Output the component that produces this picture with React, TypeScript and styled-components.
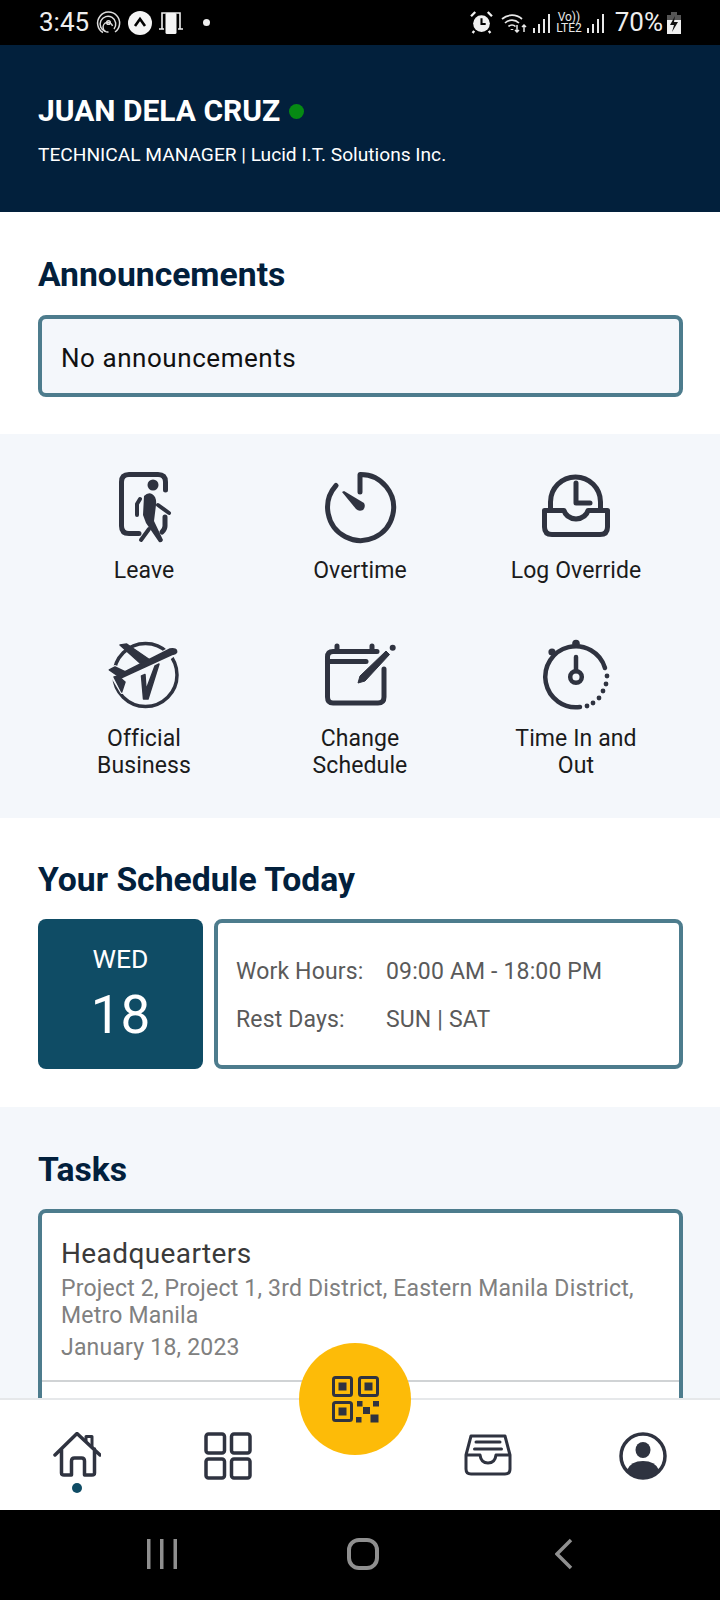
import React from "react";
import styled, { createGlobalStyle } from "styled-components";

const GlobalStyle = createGlobalStyle`
  html, body {
    margin: 0;
    padding: 0;
    background: #000;
  }
  * {
    box-sizing: border-box;
  }
`;

const Screen = styled.div`
  position: relative;
  width: 720px;
  height: 1600px;
  display: flex;
  flex-direction: column;
  overflow: hidden;
  font-family: Roboto, "Liberation Sans", sans-serif;
  background: #fff;
`;

const StatusBar = styled.div`
  flex: 0 0 45px;
  display: flex;
  align-items: center;
  justify-content: space-between;
  padding: 0 39px 0 39px;
  background: #000;
  color: #eee;
`;
const StatusGroup = styled.div<{ $gap: number }>`
  display: flex;
  align-items: center;
  gap: ${(p) => p.$gap}px;
`;
const StatusText = styled.span`
  font-size: 26px;
  line-height: 45px;
`;
const BatteryText = styled(StatusText)`
  margin-left: 5px;
`;
const AlarmSlot = styled.span`
  display: flex;
  margin-right: 4px;
`;

const Content = styled.div`
  flex: 1;
  min-height: 0;
  overflow: hidden;
`;

const Header = styled.header`
  height: 167px;
  padding: 50px 38px 0;
  background: #02203c;
  color: #fff;
`;
const NameRow = styled.div`
  display: flex;
  align-items: center;
  gap: 9px;
`;
const Name = styled.h1`
  margin: 0;
  font-size: 30px;
  line-height: 32px;
  font-weight: 700;
`;
const OnlineDot = styled.span`
  width: 15px;
  height: 15px;
  border-radius: 50%;
  background: #068a13;
`;
const Role = styled.p`
  margin: 17px 0 0;
  font-size: 19.15px;
  line-height: 22px;
`;

const Section = styled.section<{ $tint?: boolean; $h: number; $top: number }>`
  height: ${(p) => p.$h}px;
  padding: ${(p) => p.$top}px 37px 0 38px;
  background: ${(p) => (p.$tint ? "#f4f7fb" : "#fff")};
`;
const Heading = styled.h2<{ $after: number }>`
  margin: 0 0 ${(p) => p.$after}px;
  font-size: 33.7px;
  line-height: 44px;
  font-weight: 700;
  color: #02203c;
`;

const AnnouncementBox = styled.div`
  height: 82px;
  display: flex;
  align-items: center;
  padding: 4px 19px 0;
  font-size: 26px;
  letter-spacing: 0.55px;
  color: #111;
  background: #f4f7fb;
  border: 4px solid #4d7c8d;
  border-radius: 8px;
`;

const ActionsSection = styled.section`
  height: 384px;
  padding: 31px 36px 0;
  background: #f4f7fb;
  display: grid;
  grid-template-columns: repeat(3, 216px);
  grid-template-rows: 170px 170px;
`;
const Action = styled.button`
  display: flex;
  flex-direction: column;
  align-items: center;
  padding: 0;
  border: 0;
  background: none;
  font: inherit;
  color: #1b1b1b;
`;
const ActionIcon = styled.svg`
  width: 80px;
  height: 80px;
  flex: none;
`;
const ActionLabel = styled.span<{ $top: number }>`
  width: 140px;
  margin-top: ${(p) => p.$top}px;
  font-size: 23px;
  line-height: 27px;
  letter-spacing: 0.1px;
  text-align: center;
`;

const ScheduleRow = styled.div`
  display: flex;
  gap: 11px;
  height: 150px;
`;
const DateCard = styled.div`
  flex: 0 0 165px;
  display: flex;
  flex-direction: column;
  align-items: center;
  padding-top: 23px;
  background: #0f4c65;
  border-radius: 8px;
  color: #fff;
`;
const DateDay = styled.div`
  font-size: 26.5px;
  line-height: 34px;
`;
const DateNumber = styled.div`
  font-size: 53px;
  line-height: 60px;
  margin-top: 9px;
`;
const InfoCard = styled.div`
  flex: 1;
  display: grid;
  grid-template-columns: 150px 1fr;
  align-content: center;
  row-gap: 20px;
  padding: 4px 18px 0;
  font-size: 23px;
  line-height: 28px;
  letter-spacing: 0.15px;
  color: #5a5a5a;
  background: #fff;
  border: 4px solid #4d7c8d;
  border-radius: 8px;
`;

const TaskCard = styled.div`
  background: #fff;
  border: 4px solid #4d7c8d;
  border-radius: 8px;
`;
const TaskItem = styled.div`
  padding: 19px 19px 19px;
  border-bottom: 2px solid #d0d3d5;
`;
const TaskTitle = styled.div`
  font-size: 28px;
  line-height: 43px;
  letter-spacing: 0.4px;
  color: #3a3a3a;
`;
const TaskText = styled.div`
  font-size: 23px;
  line-height: 27px;
  letter-spacing: 0.2px;
  color: #808080;
`;
const TaskDate = styled(TaskText)`
  margin-top: 5px;
`;
const TaskBlank = styled.div`
  height: 120px;
`;

const TabBar = styled.nav`
  flex: 0 0 112px;
  display: flex;
  justify-content: space-between;
  padding: 32px 53px 0;
  background: #fff;
  border-top: 2px solid #e6e8ea;
`;
const TabGroup = styled.div<{ $gap: number }>`
  display: flex;
  gap: ${(p) => p.$gap}px;
`;
const Tab = styled.div`
  position: relative;
  width: 48px;
  height: 48px;
`;
const TabIcon = styled.svg`
  display: block;
  width: 48px;
  height: 48px;
`;
const ActiveDot = styled.span`
  position: absolute;
  left: 19px;
  top: 51px;
  width: 10px;
  height: 10px;
  border-radius: 50%;
  background: #0f4c65;
`;
const Fab = styled.button`
  position: absolute;
  left: 299px;
  top: 1343px;
  width: 112px;
  height: 112px;
  display: flex;
  align-items: center;
  justify-content: center;
  padding: 0;
  border: 0;
  border-radius: 50%;
  background: #fdbb08;
`;

const SystemNav = styled.div`
  flex: 0 0 90px;
  display: grid;
  grid-template-columns: repeat(3, 201px);
  align-items: center;
  padding: 0 0 2px 61px;
  background: #000;
`;
const SystemIcon = styled.svg`
  justify-self: center;
  display: block;
`;

const ink = "#2f3340";
const tintBg = "#f4f7fb";

const lineProps = {
  fill: "none",
  stroke: ink,
  strokeWidth: 5,
  strokeLinecap: "round" as const,
  strokeLinejoin: "round" as const,
};

const LeaveIcon = () => (
  <ActionIcon viewBox="0 0 80 80">
    <path {...lineProps} d="M61.5 25 V17 Q61.5 9.5 54 9.500 H25 Q17.500 9.500 17.500 17 V61 Q17.500 68.500 25 68.500 H35" />
    <path {...lineProps} d="M61 52 V61 Q61 64 58 67" />
    <circle cx="49" cy="20" r="5.5" fill={ink} />
    <path fill={ink} d="M40 31 Q44 27 48 29 Q53 32 52 40 L50 56 L59 75 Q58 78 55 77 L42 58 L39 50 Z" />
    <path {...lineProps} strokeWidth={4} d="M36 34 L33 39 L33 50" />
    <path {...lineProps} strokeWidth={4} d="M54 40 L65 48" />
    <path {...lineProps} strokeWidth={4} d="M45 64 L37 75" />
  </ActionIcon>
);

const OvertimeIcon = () => (
  <ActionIcon viewBox="0 0 80 80">
    <path {...lineProps} d="M40 27 V9.5 A33 33 0 1 1 16 20.5" />
    <path fill={ink} d="M22 27 L24 26 L44 38 Q46 42 43 45 Q39 47 36 44 Z" />
  </ActionIcon>
);

const LogOverrideIcon = () => (
  <ActionIcon viewBox="0 0 80 80">
    <path {...lineProps} d="M14.5 43 V37 A25 25 0 0 1 64.5 37 V43" />
    <path {...lineProps} d="M40 18 V38 H54" />
    <path {...lineProps} d="M8.5 45.5 H28 Q30 53 40 54 Q50 53 52 45.5 H71.5 V62 Q71.5 69.5 64 69.5 H16 Q8.5 69.5 8.5 62 Z" />
  </ActionIcon>
);

const BusinessIcon = () => (
  <ActionIcon viewBox="0 0 80 80">
    <circle cx="41.5" cy="40" r="31.5" fill="none" stroke={ink} strokeWidth={3.5} />
    <path fill={tintBg} stroke={tintBg} strokeWidth={4} strokeLinejoin="round" d="M5 35 L11 32 L21 36 L36 28 L46 25 L66 14 Q73 13 72.700 17 L56 30 L44 64 L39 64 L36 42 L24 48 L18 57 L9 42 Z" />
    <path fill={ink} stroke={ink} strokeWidth={1.5} strokeLinejoin="round" d="M16 10 L22.700 9 L46 25 L36 28 Z" />
    <path fill={ink} stroke={ink} strokeWidth={1.5} strokeLinejoin="round" d="M5.300 35 L11 32 L21 36.700 L66 14 Q73 13 72.700 17 Q72 19 68 19.500 L19 42 L17 43 Z" />
    <path fill={ink} stroke={ink} strokeWidth={1.5} strokeLinejoin="round" d="M10 42 L14 41 L21 47 L17.700 57 Z" />
    <path fill={ink} stroke={ink} strokeWidth={1.5} strokeLinejoin="round" d="M51 31 L55 29 L44 64 L39.500 64 L37.500 41 L41 39.500 L42 55 Z" />
  </ActionIcon>
);

const ScheduleIcon = () => (
  <ActionIcon viewBox="0 0 80 80">
    <path {...lineProps} d="M57 16.500 H13 Q7.500 16.500 7.500 22 V62 Q7.500 68 13 68 H58 Q64 68 64 62 V34" />
    <path {...lineProps} d="M7.500 26.500 H46" />
    <path {...lineProps} d="M17 11 V16 M52 11 V16" />
    <path fill={ink} stroke={ink} strokeWidth={1} strokeLinejoin="round" d="M38 48 L40 41 L66 16 L69.500 19.500 L45 46 Z" />
    <circle cx="72.700" cy="12.700" r="3" fill={ink} />
  </ActionIcon>
);

const timeDots: [number, number][] = [
  [71, 41],
  [70, 49],
  [67, 56],
  [63, 63],
  [57, 68],
  [51, 71],
];

const TimeIcon = () => (
  <ActionIcon viewBox="0 0 80 80">
    <path {...lineProps} strokeWidth={4.5} d="M69 33 A30.5 30.5 0 1 0 44 72" />
    {timeDots.map(([cx, cy]) => (
      <circle key={cx + "-" + cy} cx={cx} cy={cy} r="2.4" fill={ink} />
    ))}
    <circle cx="40" cy="8.5" r="3.8" fill={ink} />
    <circle cx="16" cy="17" r="3.6" fill={ink} />
    <path {...lineProps} strokeWidth={4.5} d="M40 22 V36" />
    <circle cx="40" cy="42" r="5.8" fill="none" stroke={ink} strokeWidth={4.5} />
  </ActionIcon>
);

const HomeIcon = () => (
  <TabIcon viewBox="0 0 48 48">
    <path fill="none" stroke={ink} strokeWidth={3.500} strokeLinejoin="round" strokeLinecap="round" d="M2 23 L24 1.500 L47 23 M8.500 17 V41 Q8.500 43 11 43 H18.500 V29 Q18.500 26 21.500 26 H28.500 Q31.500 26 31.500 29 V43 H39 Q41.500 43 41.500 41 V17" />
    <path fill="none" stroke={ink} strokeWidth={3} strokeLinejoin="round" d="M33 9 V4.500 H39 V15" />
  </TabIcon>
);

const GridIcon = () => (
  <TabIcon viewBox="0 0 48 48">
    <g fill="none" stroke={ink} strokeWidth={3.5}>
      <rect x="2" y="2" width="18.500" height="19" rx="2.500" />
      <rect x="27.500" y="2" width="18.500" height="19" rx="2.500" />
      <rect x="2" y="27" width="18.500" height="19" rx="2.500" />
      <rect x="27.500" y="27" width="18.500" height="19" rx="2.500" />
    </g>
  </TabIcon>
);

const InboxIcon = () => (
  <TabIcon viewBox="0 0 48 48">
    <path fill="none" stroke={ink} strokeWidth={3} strokeLinejoin="round" strokeLinecap="round" d="M7 4 H41 L46 23 V37 Q46 42 41 42 H7 Q2 42 2 37 V23 Z M2 23 H16 Q17 31 24 31 Q31 31 32 23 H46 M12 10 H36 M10.500 17 H37.500" />
  </TabIcon>
);

const ProfileIcon = () => (
  <TabIcon viewBox="0 0 48 48">
    <circle cx="24" cy="24" r="22" fill="none" stroke={ink} strokeWidth={3.5} />
    <ellipse cx="24" cy="18" rx="7.500" ry="8" fill={ink} />
    <path fill={ink} d="M8 38 Q12 29 24 29 Q36 29 40 38 Q33 46 24 46 Q15 46 8 38 Z" />
  </TabIcon>
);

const QrIcon = () => (
  <svg width="47" height="47" viewBox="0 0 47 47">
    <g fill="none" stroke={ink} strokeWidth={3}>
      <rect x="1.500" y="1.500" width="18" height="18" rx="2" />
      <rect x="27.500" y="1.500" width="18" height="18" rx="2" />
      <rect x="1.500" y="26.500" width="18" height="18" rx="2" />
    </g>
    <g fill={ink}>
      <rect x="6.500" y="6.500" width="8" height="8" />
      <rect x="32.500" y="6.500" width="8" height="8" />
      <rect x="6.500" y="31.500" width="8" height="8" />
      <rect x="25" y="25" width="5.500" height="5.500" />
      <rect x="41" y="25" width="6" height="5.500" />
      <rect x="31" y="31" width="7" height="7" />
      <rect x="24" y="41" width="5.500" height="5.500" />
      <rect x="38.500" y="38.500" width="8" height="8" />
    </g>
  </svg>
);

const FingerprintIcon = () => (
  <svg width="25" height="25" viewBox="0 0 25 25" fill="none" stroke="#ddd" strokeWidth={1.5}>
    <path d="M7 22.500 A11 11 0 1 1 19 22" />
    <path d="M9.500 21.500 A7.800 7.800 0 1 1 18 19" />
    <path d="M12.500 22 A4.800 4.800 0 1 1 16.500 16" />
    <circle cx="12.500" cy="12.500" r="1.800" />
  </svg>
);

const ArrowBadge = () => (
  <svg width="24" height="24" viewBox="0 0 24 24">
    <circle cx="12" cy="12" r="12" fill="#f4f4f4" />
    <path d="M7 15 L12 8 L17 15" fill="none" stroke="#000" strokeWidth={2.6} />
  </svg>
);

const DeviceIcon = () => (
  <svg width="24" height="24" viewBox="0 0 24 24">
    <path d="M0 18 H5 M19 18 H24" stroke="#eee" strokeWidth={1.6} />
    <path d="M3 18 V2 H21 V18" fill="none" stroke="#eee" strokeWidth={1.6} />
    <rect x="6.500" y="2" width="11" height="21" rx="1.500" fill="#f4f4f4" />
  </svg>
);

const SmallDot = styled.span`
  width: 7px;
  height: 7px;
  margin-left: 13px;
  border-radius: 50%;
  background: #eee;
`;

const AlarmIcon = () => (
  <svg width="23" height="23" viewBox="0 0 22 22">
    <circle cx="11" cy="12" r="8" fill="#f0f0f0" />
    <path d="M11 7 V12.500 H15" fill="none" stroke="#000" strokeWidth={2} />
    <path d="M1 5 L5 1 M21 5 L17 1 M4 19 L2.500 21 M18 19 L19.500 21" stroke="#f0f0f0" strokeWidth={2.2} />
  </svg>
);

const WifiIcon = () => (
  <svg width="27" height="24" viewBox="0 0 27 24" fill="none" stroke="#e8e8e8" strokeWidth={1.7}>
    <path d="M1 8 A15 15 0 0 1 21 8" />
    <path d="M4 12 A10 10 0 0 1 18 12" />
    <path d="M7.500 15.500 A5 5 0 0 1 14.500 15.500" />
    <path d="M11 18 V19" strokeWidth={2.6} />
    <path d="M16 14 V21 M14 19 L16 21 L18 19 M23 21 V14 M21 16 L23 14 L25 16" strokeWidth={1.5} />
  </svg>
);

const SignalIcon = () => (
  <svg width="20" height="22" viewBox="0 0 20 22" fill="#e8e8e8">
    <rect x="1" y="16" width="2" height="5" />
    <rect x="6" y="12" width="2" height="9" />
    <rect x="11" y="7" width="2" height="14" />
    <rect x="16" y="2" width="2" height="19" />
  </svg>
);

const VolteBox = styled.span`
  display: flex;
  flex-direction: column;
  align-items: center;
  font-size: 12px;
  line-height: 11px;
  color: #e8e8e8;
`;

const BatteryIcon = () => (
  <svg width="14" height="24" viewBox="0 0 14 24">
    <rect x="4" y="1" width="6" height="3" fill="#555" />
    <rect x="0" y="4" width="14" height="6" fill="#555" />
    <rect x="0" y="9" width="14" height="14" fill="#f0f0f0" />
    <path d="M8 5 L3 14 H7 L5 21 L11 11 H7 Z" fill="#111" />
  </svg>
);

export default function App() {
  return (
    <Screen>
      <GlobalStyle />
      <StatusBar>
        <StatusGroup $gap={7}>
          <StatusText>3:45</StatusText>
          <FingerprintIcon />
          <ArrowBadge />
          <DeviceIcon />
          <SmallDot />
        </StatusGroup>
        <StatusGroup $gap={4}>
          <AlarmSlot>
            <AlarmIcon />
          </AlarmSlot>
          <WifiIcon />
          <SignalIcon />
          <VolteBox>
            <span>Vo))</span>
            <span>LTE2</span>
          </VolteBox>
          <SignalIcon />
          <BatteryText>70%</BatteryText>
          <BatteryIcon />
        </StatusGroup>
      </StatusBar>

      <Content>
        <Header>
          <NameRow>
            <Name>JUAN DELA CRUZ</Name>
            <OnlineDot />
          </NameRow>
          <Role>TECHNICAL MANAGER | Lucid I.T. Solutions Inc.</Role>
        </Header>

        <Section $h={222} $top={41}>
          <Heading $after={18}>Announcements</Heading>
          <AnnouncementBox>No announcements</AnnouncementBox>
        </Section>

        <ActionsSection>
          <Action>
            <LeaveIcon />
            <ActionLabel $top={12}>Leave</ActionLabel>
          </Action>
          <Action>
            <OvertimeIcon />
            <ActionLabel $top={12}>Overtime</ActionLabel>
          </Action>
          <Action>
            <LogOverrideIcon />
            <ActionLabel $top={12}>Log Override</ActionLabel>
          </Action>
          <Action>
            <BusinessIcon />
            <ActionLabel $top={10}>Official Business</ActionLabel>
          </Action>
          <Action>
            <ScheduleIcon />
            <ActionLabel $top={10}>Change Schedule</ActionLabel>
          </Action>
          <Action>
            <TimeIcon />
            <ActionLabel $top={10}>Time In and Out</ActionLabel>
          </Action>
        </ActionsSection>

        <Section $h={289} $top={40}>
          <Heading $after={17}>Your Schedule Today</Heading>
          <ScheduleRow>
            <DateCard>
              <DateDay>WED</DateDay>
              <DateNumber>18</DateNumber>
            </DateCard>
            <InfoCard>
              <span>Work Hours:</span>
              <span>09:00 AM - 18:00 PM</span>
              <span>Rest Days:</span>
              <span>SUN | SAT</span>
            </InfoCard>
          </ScheduleRow>
        </Section>

        <Section $tint $h={400} $top={41}>
          <Heading $after={17}>Tasks</Heading>
          <TaskCard>
            <TaskItem>
              <TaskTitle>Headquearters</TaskTitle>
              <TaskText>Project 2, Project 1, 3rd District, Eastern Manila District, Metro Manila</TaskText>
              <TaskDate>January 18, 2023</TaskDate>
            </TaskItem>
            <TaskBlank />
          </TaskCard>
        </Section>
      </Content>

      <TabBar>
        <TabGroup $gap={103}>
          <Tab>
            <HomeIcon />
            <ActiveDot />
          </Tab>
          <Tab>
            <GridIcon />
          </Tab>
        </TabGroup>
        <TabGroup $gap={107}>
          <Tab>
            <InboxIcon />
          </Tab>
          <Tab>
            <ProfileIcon />
          </Tab>
        </TabGroup>
      </TabBar>

      <Fab>
        <QrIcon />
      </Fab>

      <SystemNav>
        <SystemIcon width="30" height="32" viewBox="0 0 30 32" fill="#8f8f8f">
          <rect x="0" y="1" width="3.500" height="30" />
          <rect x="13" y="1" width="3.500" height="30" />
          <rect x="26.500" y="1" width="3.500" height="30" />
        </SystemIcon>
        <SystemIcon width="32" height="32" viewBox="0 0 32 32">
          <rect x="2" y="2" width="28" height="28" rx="10" fill="none" stroke="#8f8f8f" strokeWidth={4} />
        </SystemIcon>
        <SystemIcon width="18" height="32" viewBox="0 0 18 32">
          <path d="M16 2 L2 16 L16 30" fill="none" stroke="#8f8f8f" strokeWidth={3.500} />
        </SystemIcon>
      </SystemNav>
    </Screen>
  );
}
